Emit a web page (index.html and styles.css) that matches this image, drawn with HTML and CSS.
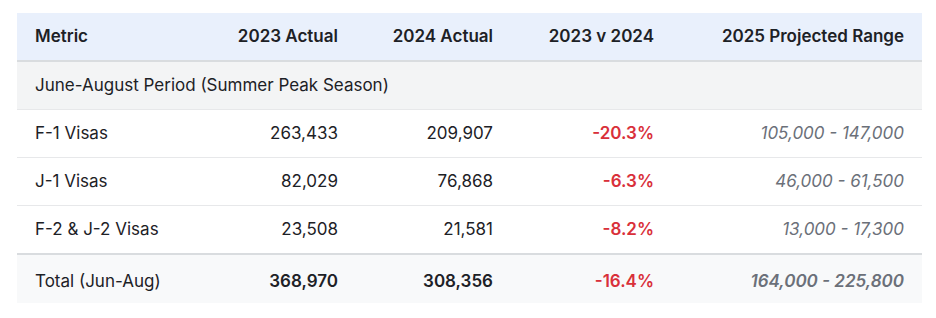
FILE: index.html
```html
<!DOCTYPE html>
<html lang="en">
<head>
<meta charset="utf-8">
<title>Visa Table</title>
<link rel="stylesheet" href="styles.css">
</head>
<body>
<div class="wrap">
  <table class="data">
    <colgroup>
      <col class="c1"><col class="c2"><col class="c3"><col class="c4"><col class="c5">
    </colgroup>
    <thead>
      <tr>
        <th class="left">Metric</th>
        <th>2023 Actual</th>
        <th>2024 Actual</th>
        <th>2023 v 2024</th>
        <th>2025 Projected Range</th>
      </tr>
    </thead>
    <tbody>
      <tr class="group"><td colspan="5" class="left">June-August Period (Summer Peak Season)</td></tr>
      <tr>
        <td class="left">F-1 Visas</td><td>263,433</td><td>209,907</td><td class="neg">-20.3%</td><td class="proj">105,000 - 147,000</td>
      </tr>
      <tr>
        <td class="left">J-1 Visas</td><td>82,029</td><td>76,868</td><td class="neg">-6.3%</td><td class="proj">46,000 - 61,500</td>
      </tr>
      <tr>
        <td class="left">F-2 &amp; J-2 Visas</td><td>23,508</td><td>21,581</td><td class="neg">-8.2%</td><td class="proj">13,000 - 17,300</td>
      </tr>
      <tr class="total">
        <td class="left">Total (Jun-Aug)</td><td class="b">368,970</td><td class="b">308,356</td><td class="neg">-16.4%</td><td class="proj b">164,000 - 225,800</td>
      </tr>
    </tbody>
  </table>
</div>
</body>
</html>
```
FILE: styles.css
```css
html, body {
  margin: 0;
  padding: 0;
  background: #ffffff;
}
body {
  font-family: Inter, "Noto Sans", "Liberation Sans", sans-serif;
  color: #1d2126;
  font-size: 17px;
}
.wrap {
  padding: 13px 14px 0 17px;
}
.data {
  width: 905px;
  border-collapse: collapse;
  table-layout: fixed;
}
.c1 { width: 180px; }
.c2 { width: 159px; }
.c3 { width: 155px; }
.c4 { width: 161px; }
.c5 { width: 250px; }
.data th, .data td {
  padding: 14px 18px;
  line-height: 19px;
  text-align: right;
  white-space: nowrap;
}
.data .left { text-align: left; }
.data thead th {
  background: #e9f0fc;
  font-weight: 600;
  color: #1d2126;
  border-bottom: 2px solid #d9dcdf;
}
.data tbody td {
  border-bottom: 1px solid #e7e8ea;
}
.data .group td {
  background: #f3f4f5;
}
.data .neg {
  color: #d9303a;
  font-weight: 600;
}
.data .proj {
  color: #6b7079;
  font-style: italic;
}
.data .total td {
  background: #f8f9fa;
  border-top: 2px solid #d9dcdf;
  border-bottom: none;
  padding-top: 17px;
  padding-bottom: 12px;
}
.data .b { font-weight: 600; }
```
